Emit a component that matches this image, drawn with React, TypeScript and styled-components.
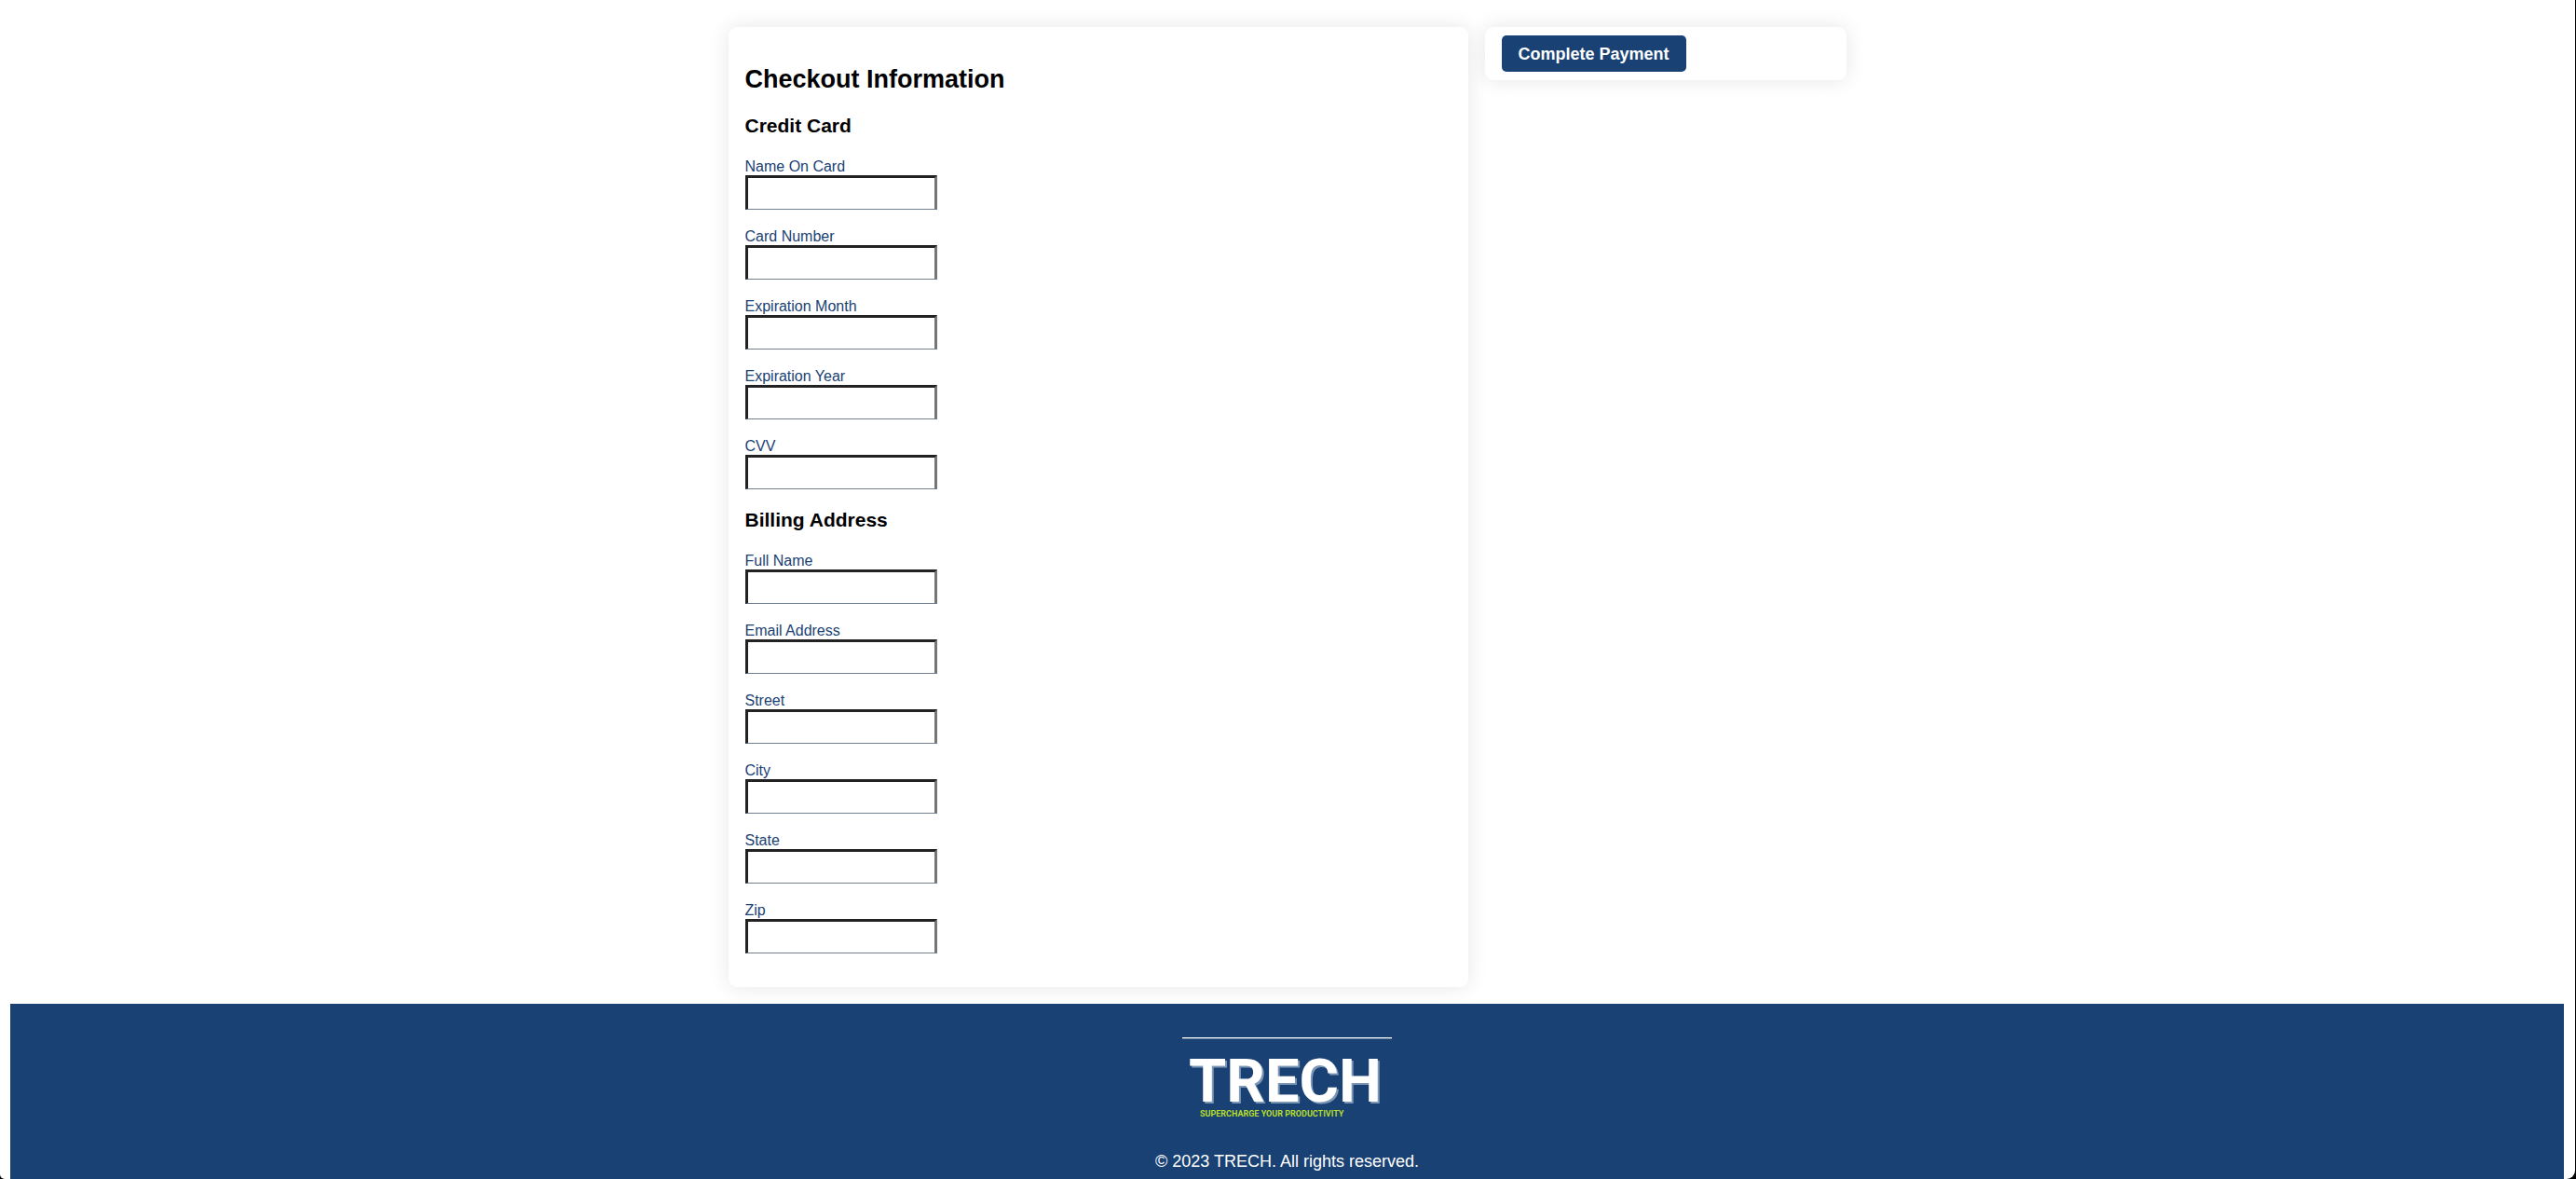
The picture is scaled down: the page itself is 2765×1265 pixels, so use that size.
import React from "react";
import styled, { createGlobalStyle } from "styled-components";

const navy = "#194173";
const sans = `Helvetica, "Liberation Sans", Arial, sans-serif`;

const GlobalStyle = createGlobalStyle`
  html { background: #000; }
  body { margin: 0; font-family: ${sans}; font-size: 18px; color: #000; }
  *, *::before, *::after { box-sizing: border-box; }
`;

const Page = styled.div`
  display: flex;
  flex-direction: column;
  min-height: 100vh;
  margin-right: 1px;
  padding: 29px 12px 0 11px;
  background: #fff;
  border-radius: 0 0 9px 5px;
  overflow: hidden;
`;

const Main = styled.main`
  display: grid;
  grid-template-columns: minmax(0, 794fr) minmax(0, 388fr);
  align-items: start;
  gap: 18px;
  width: 100%;
  max-width: 1200px;
  margin: 0 auto 18px;
`;

const Card = styled.div`
  background: #fff;
  border-radius: 9px;
  box-shadow: 0 0 22px rgba(0, 0, 0, 0.1);
`;

const FormCard = styled(Card)`
  padding: 18px;
`;

const ActionCard = styled(Card)`
  padding: 9px 18px;
`;

const Title = styled.h2`
  margin: 23px 0 22px;
  font-size: 27px;
  line-height: 31px;
`;

const Group = styled.fieldset`
  margin: 0;
  padding: 0;
  border: 0;
  min-width: 0;
`;

const GroupTitle = styled.h3`
  margin: 0;
  padding: 0 0 20px;
  font-size: 21px;
  line-height: 24px;

  ${Group} + ${Group} & {
    padding-top: 3px;
  }
`;

const Field = styled.div`
  display: flex;
  flex-direction: column;
  align-items: flex-start;
  padding-top: 1px;

  & + & {
    margin-top: 17px;
  }

  &:last-child {
    margin-bottom: 18px;
  }
`;

const Label = styled.label`
  padding-top: 2px;
  color: ${navy};
  font-size: 16px;
  line-height: 18px;
`;

const TextInput = styled.input`
  width: 206px;
  height: 37px;
  padding: 0 9px;
  border-style: solid;
  border-width: 3px 3px 1px;
  border-color: #222 #767676 #708090 #222;
  border-radius: 0;
  background: #fff;
  font-family: ${sans};
  font-size: 16px;
  outline: none;
`;

const PayButton = styled.button`
  display: block;
  padding: 10px 18px 8px;
  border: 0;
  border-radius: 5px;
  background: ${navy};
  color: #fff;
  font-family: ${sans};
  font-size: 18px;
  font-weight: 700;
  line-height: 21px;
  cursor: pointer;
`;

const Footer = styled.footer`
  display: flex;
  flex: 1;
  flex-direction: column;
  align-items: center;
  padding: 36px 18px 8px;
  background: ${navy};
  color: #fff;
`;

const Logo = styled.svg`
  display: block;
  width: 225px;
  height: 90px;
`;

const Wordmark = styled.text`
  fill: #fff;
  font-family: Roboto, sans-serif;
  font-size: 65px;
  font-weight: 700;
  filter: drop-shadow(2px 2px 0 #7c96b5);
`;

const Tagline = styled.text`
  fill: #b5dc2c;
  font-family: Roboto, sans-serif;
  font-size: 9px;
  font-weight: 700;
`;

const Copyright = styled.p`
  margin: 33px 0 0;
  line-height: 21px;
`;

const cardFields = [
  ["cardName", "Name On Card"],
  ["cardNumber", "Card Number"],
  ["expMonth", "Expiration Month"],
  ["expYear", "Expiration Year"],
  ["cvv", "CVV"],
];

const addressFields = [
  ["fullName", "Full Name"],
  ["email", "Email Address"],
  ["street", "Street"],
  ["city", "City"],
  ["state", "State"],
  ["zip", "Zip"],
];

function FieldGroup({ title, fields }: { title: string; fields: string[][] }) {
  return (
    <Group aria-label={title}>
      <GroupTitle>{title}</GroupTitle>
      {fields.map(([id, label]) => (
        <Field key={id}>
          <Label htmlFor={id}>{label}</Label>
          <TextInput id={id} name={id} type="text" />
        </Field>
      ))}
    </Group>
  );
}

function TrechLogo() {
  return (
    <Logo viewBox="0 0 225 90" role="img" aria-label="TRECH">
      <rect width="225" height="1" fill="#fff" />
      <rect y="1" width="225" height="1" fill="#5f7d9f" />
      <Wordmark x="7" y="69">TRECH</Wordmark>
      <Tagline x="19" y="85">SUPERCHARGE YOUR PRODUCTIVITY</Tagline>
    </Logo>
  );
}

export default function App() {
  return (
    <>
      <GlobalStyle />
      <Page>
        <Main>
          <FormCard as="form">
            <Title>Checkout Information</Title>
            <FieldGroup title="Credit Card" fields={cardFields} />
            <FieldGroup title="Billing Address" fields={addressFields} />
          </FormCard>
          <ActionCard>
            <PayButton type="button">Complete Payment</PayButton>
          </ActionCard>
        </Main>
        <Footer>
          <TrechLogo />
          <Copyright>© 2023 TRECH. All rights reserved.</Copyright>
        </Footer>
      </Page>
    </>
  );
}
